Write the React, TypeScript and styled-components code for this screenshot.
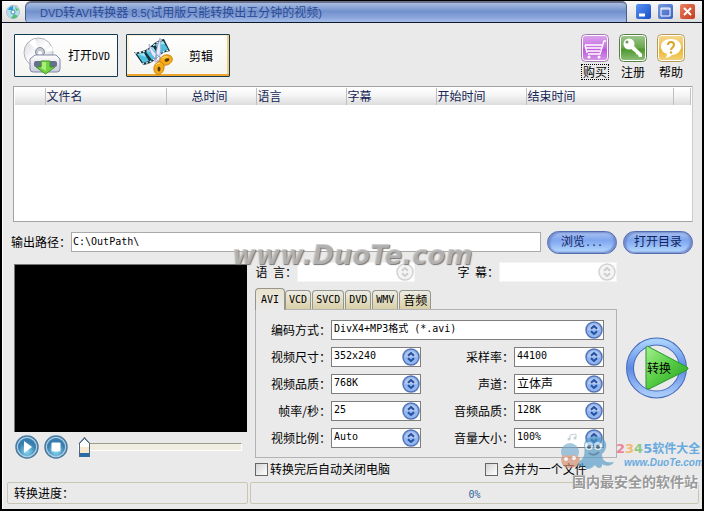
import React, { useState } from "react";
import styled, { createGlobalStyle, css } from "styled-components";

const cjk = `"Noto Sans CJK SC", sans-serif`;
const mono = `"DejaVu Sans Mono", "Noto Sans CJK SC", monospace`;

const GlobalStyle = createGlobalStyle`
  * { box-sizing: border-box; }
  body { margin: 0; background: #e9e9e9; font: 12px/16px ${cjk}; color: #000; }
  button, input, select { font: inherit; color: inherit; margin: 0; }
  button { padding: 0; border: 0; background: none; cursor: pointer; }
`;

const Window = styled.div`
  position: relative;
  display: flex;
  flex-direction: column;
  min-height: 100vh;
  border: solid #000;
  border-width: 1px 2px 2px;
  background: #eaeaea;
  overflow: hidden;
`;

const TitleBar = styled.header`
  display: flex;
  align-items: stretch;
  height: 22px;
  background: linear-gradient(#fafafa, #dedede);
  border-bottom: 1px solid #10182c;
`;

const AppIcon = styled.span`
  display: flex;
  align-items: center;
  padding: 0 4px;
`;

const Title = styled.h1`
  flex: 1;
  margin: 0;
  padding-left: 14px;
  border: 1px solid #4a5c88;
  border-top: 2px solid #69728a;
  border-bottom: 0;
  border-radius: 6px 5px 0 3px;
  background: linear-gradient(#a9bde2, #7291cc 45%, #89a4da 75%, #a5bde8);
  color: #2b4a94;
  font-size: 12px;
  font-weight: 400;
  line-height: 18px;
  white-space: nowrap;
`;

const Latin = styled.span<{ $size?: number; $mono?: boolean }>`
  font-family: ${(p) => (p.$mono ? mono : `"Liberation Sans", sans-serif`)};
  font-size: ${(p) => p.$size ?? 11}px;
`;

const WindowButtons = styled.div`
  display: flex;
  align-items: center;
  gap: 7px;
  padding: 0 7px 0 9px;
`;

const WindowButton = styled.button<{ $tone: string }>`
  display: flex;
  width: 15px;
  height: 15px;
  border-radius: 2px;
  background: ${(p) => p.$tone};
`;

const Content = styled.main`
  display: flex;
  flex: 1;
  flex-direction: column;
  padding: 11px 9px 0 11px;
  border-left: 1px solid #fff;
`;

const Toolbar = styled.div`
  display: flex;
  gap: 8px;
  height: 52px;
`;

const BigButton = styled.button<{ $hot?: boolean }>`
  display: flex;
  align-items: center;
  width: 104px;
  height: 43px;
  padding-left: ${(p) => (p.$hot ? 6 : 8)}px;
  gap: ${(p) => (p.$hot ? 16 : 6)}px;
  border: 1px solid #153b54;
  border-radius: 1px;
  background: linear-gradient(#fff, #f4f4f1);
  white-space: nowrap;
  ${(p) => p.$hot && css`box-shadow: inset 0 -2px #efa52b, inset -2px 0 #f8cd80, inset 2px 1px #fff0d2;`}
`;

const ActionGroup = styled.div`
  display: flex;
  gap: 8px;
  margin-left: auto;
  padding-right: 7px;
`;

const Action = styled.button<{ $focused?: boolean }>`
  display: flex;
  flex-direction: column;
  align-items: center;
  gap: 2px;
  width: 30px;
  white-space: nowrap;
  span {
    padding: 0 1px;
    line-height: 14px;
    border: 1px dotted ${(p) => (p.$focused ? "#000" : "transparent")};
  }
`;

const FileArea = styled.div`
  flex: 1;
  min-height: 135px;
  margin-left: -1px;
  border: 1px solid #a3a3a3;
  border-right-color: #ccc;
  background: #fff;
  padding: 1px;
`;

const FileTable = styled.table`
  width: 100%;
  border-collapse: collapse;
  table-layout: fixed;
`;

const HeadCell = styled.th<{ $w?: number; $right?: boolean }>`
  width: ${(p) => (p.$w ? `${p.$w}px` : "auto")};
  height: 17px;
  padding: 0 ${(p) => (p.$right ? 28 : 2)}px 2px 1px;
  border-right: 1px solid #c0c0c0;
  background: linear-gradient(#fff, #f4f4f4 45%, #dcdcdc);
  color: #142653;
  font-weight: 400;
  line-height: 15px;
  text-align: ${(p) => (p.$right ? "right" : "left")};
`;

const OutputRow = styled.div`
  display: flex;
  align-items: center;
  gap: 6px;
  height: 24px;
  margin-top: 8px;
`;

const OutputField = styled.label`
  display: flex;
  flex: 1;
  align-items: center;
  margin-left: -3px;
  white-space: nowrap;
`;

const PathInput = styled.input`
  flex: 1;
  min-width: 0;
  height: 20px;
  padding: 0 1px 2px;
  border: 1px solid #aaa;
  background: #fff;
  font: 10px/16px ${mono};
`;

const PillButton = styled.button`
  width: 70px;
  height: 23px;
  border: 1px solid #536db0;
  border-radius: 12px;
  background: linear-gradient(#adc4f1, #7fa6ee 38%, #8cb2f4 55%, #b9deff);
  box-shadow: inset 2px 1px 2px #7189cc, inset -2px -1px 2px #7189cc;
  color: #10245e;
  line-height: 18px;
  padding-bottom: 2px;
`;

const Workspace = styled.div`
  display: grid;
  grid-template-columns: 233px minmax(0, 1fr) 68px;
  column-gap: 8px;
  margin-top: 8px;
`;

const Player = styled.section`
  display: flex;
  flex-direction: column;
`;

const Screen = styled.div`
  height: 168px;
  margin-top: 2px;
  background: #000;
  border: 1px solid #777;
  border-width: 1px 0 0 1px;
`;

const Controls = styled.div`
  display: flex;
  align-items: center;
  height: 30px;
  padding-left: 1px;
  gap: 5px;
`;

const RoundButton = styled.button`
  display: flex;
  width: 24px;
  height: 24px;
`;

const Seek = styled.input`
  flex: 1;
  min-width: 0;
  height: 20px;
  margin: 0 5px 0 5px;
  appearance: none;
  background: none;
  &::-webkit-slider-runnable-track {
    height: 8px;
    border: 1px solid #fff;
    border-top-color: #9c9c90;
    background: #f0ede1;
  }
  &::-webkit-slider-thumb {
    appearance: none;
    width: 11px;
    height: 20px;
    margin-top: -7px;
    border: solid #4a6787;
    border-width: 0 1px;
    clip-path: polygon(50% 0, 100% 30%, 100% 100%, 0 100%, 0 30%);
    background: linear-gradient(135deg, #4a6787 0 22%, transparent 22%),
      linear-gradient(225deg, #4a6787 0 22%, transparent 22%),
      linear-gradient(#fff 0 50%, #f8e8cc 50% 80%, #2b6aa5 80%);
  }
`;

const Settings = styled.section`
  display: flex;
  flex-direction: column;
`;

const TrackRow = styled.div`
  display: grid;
  grid-template-columns: 42px minmax(0, 1fr) 84px minmax(0, 1fr);
  align-items: center;
  height: 19px;
`;

const FieldLabel = styled.label`
  text-align: right;
  white-space: pre;
`;

const SelectBox = styled.span<{ $wide?: boolean }>`
  position: relative;
  display: flex;
  grid-column: ${(p) => (p.$wide ? "2 / -1" : "auto")};
  svg { position: absolute; right: 1px; top: 1px; pointer-events: none; }
`;

const Select = styled.select<{ $cjk?: boolean }>`
  width: 100%;
  height: 20px;
  padding: 0 20px 2px 2px;
  appearance: none;
  border: 1px solid #7e7e7e;
  border-radius: 0;
  background: #fff;
  font: ${(p) => (p.$cjk ? `12px/16px ${cjk}` : `10px/16px ${mono}`)};
  opacity: 1;
  &:disabled { border-color: #f4f4f4; }
`;

const Tabs = styled.div`
  display: flex;
  align-items: flex-end;
  gap: 1px;
  height: 21px;
  margin: 7px 0 0;
`;

const Tab = styled.button<{ $active: boolean; $cjk?: boolean }>`
  height: ${(p) => (p.$active ? 22 : 19)}px;
  margin-bottom: ${(p) => (p.$active ? -1 : 0)}px;
  margin-right: ${(p) => (p.$active ? -1 : 0)}px;
  padding: 0 ${(p) => (p.$active ? 5 : 3)}px;
  z-index: ${(p) => (p.$active ? 1 : 0)};
  border: 1px solid #96968c;
  border-bottom: 0;
  border-radius: 4px 4px 0 0;
  background: ${(p) => (p.$active ? "linear-gradient(#e9e3cd, #eaeaea)" : "linear-gradient(#eeede6, #d9cfa5)")};
  font: ${(p) => (p.$cjk ? `12px/16px ${cjk}` : `10px/16px ${mono}`)};
`;

const Panel = styled.div`
  display: grid;
  grid-template-columns: 75px minmax(0, 1fr) 93px minmax(0, 1fr);
  align-items: center;
  row-gap: 7px;
  padding: 10px 12px 9px 0;
  border: 1px solid #b3b3b3;
`;

const Options = styled.div`
  display: grid;
  grid-template-columns: 230px 1fr;
  margin-top: 3px;
  margin-bottom: 1px;
`;

const Check = styled.label`
  display: flex;
  align-items: center;
  gap: 2px;
  white-space: nowrap;
  input {
    appearance: none;
    width: 13px;
    height: 13px;
    border: 1px solid #666;
    background: linear-gradient(135deg, #d4d4d4, #fff);
  }
  input:checked { background: #4d78b8; }
`;

const ConvertSide = styled.div`
  padding: 74px 0 0 1px;
`;

const ConvertButton = styled.button`
  display: grid;
  place-items: center;
  width: 64px;
  height: 64px;
  > * { grid-area: 1 / 1; }
  svg { display: block; }
  span { z-index: 1; padding-left: 2px; }
`;

const StatusBar = styled.footer`
  display: grid;
  grid-template-columns: 241px 1fr;
  gap: 2px;
  padding: 4px 3px 5px 4px;
  border-left: 1px solid #fff;
`;

const StatusCell = styled.div<{ $center?: boolean }>`
  height: 22px;
  padding: 0 6px;
  border: 1px solid #c9c7b4;
  border-radius: 2px;
  line-height: 19px;
  text-align: ${(p) => (p.$center ? "center" : "left")};
  color: ${(p) => (p.$center ? "#2d609b" : "#000")};
`;

const SiteMark = styled.div`
  position: absolute;
  top: 238px;
  left: 0;
  right: 0;
  text-align: center;
  pointer-events: none;
  color: rgba(195, 195, 195, 0.75);
  font: italic bold 26px/32px "DejaVu Sans", sans-serif;
  text-shadow: 1px 1px 1px #777;
`;

const CornerMark = styled.div`
  position: absolute;
  right: 0;
  bottom: 18px;
  display: grid;
  grid-template-columns: 56px 86px;
  pointer-events: none;
`;

const MarkText = styled.div`
  padding-top: 7px;
  color: #69aadf;
  font-weight: 700;
  white-space: nowrap;
`;

const MarkName = styled.div`
  font: bold 12px/16px ${cjk};
`;

const MarkDigit = styled.span<{ $c: string }>`
  color: ${(p) => p.$c};
  font: bold 13px/16px "DejaVu Sans", sans-serif;
`;

const MarkUrl = styled.div`
  padding-left: 8px;
  font: italic bold 10px/12px "Liberation Sans", sans-serif;
`;

const MarkSlogan = styled.div`
  grid-column: 1 / -1;
  padding-left: 12px;
  color: #999;
  font: bold 14px/20px ${cjk};
  text-shadow: 1px 1px 1px #fff;
`;

const Knob = ({ disabled }: { disabled?: boolean }) => (
  <svg width="18" height="18" viewBox="0 0 18 18" aria-hidden="true">
    <circle cx="9" cy="9" r="8" fill={disabled ? "#f4f4f4" : "#91b6f0"} stroke={disabled ? "#d2d2d2" : "#5574b5"} strokeWidth="1.5" />
    {!disabled && <path d="M3 9a6 6 0 0 1 12 0z" fill="#b4c8ee" />}
    <path d="M6 7.800 9 5l3 2.800M6 10.200 9 13l3-2.800" fill="none" stroke={disabled ? "#cdcdcd" : "#2450a2"} strokeWidth="2" />
  </svg>
);

const DiscIcon = () => (
  <svg width="15" height="16" viewBox="0 0 15 16" aria-hidden="true">
    <path d="M2 5 5 1h6l3 5z" fill="#c8dfce" />
    <circle cx="7" cy="8" r="6.500" fill="#aedff0" stroke="#b3c0c8" />
    <path d="M2 6a6 6 0 0 1 5-4v4z" fill="#2e9ad6" /><path d="M8 10l4 2a6 6 0 0 1-7 2z" fill="#55bd79" />
    <path d="M9 3l4 3-3 1z" fill="#5cc56f" />
    <circle cx="7" cy="8" r="2" fill="#fff" stroke="#488eb4" />
  </svg>
);

const OpenDvdIcon = () => (
  <svg width="39" height="38" viewBox="0 0 39 38" aria-hidden="true">
    <defs>
      <linearGradient id="disc" x2="1" y2="1"><stop stopColor="#d5d5de" /><stop offset=".5" stopColor="#fff" /><stop offset="1" stopColor="#b8bccb" /></linearGradient>
      <linearGradient id="drive" x2="0" y2="1"><stop stopColor="#fff" /><stop offset="1" stopColor="#c9ccdc" /></linearGradient>
    </defs>
    <circle cx="15.500" cy="15.500" r="14.500" fill="url(#disc)" stroke="#b0b0ba" />
    <path d="M16 15 6 6a14 14 0 0 1 6-4zM17 15 29 9l1 5z" fill="#fff" />
    <circle cx="17" cy="15" r="4.500" fill="#c5c8d0" stroke="#858b99" /><circle cx="17" cy="16" r="2" fill="#fff" />
    <path d="M12 18h21l4 4v10q0 3-3 3H10q-3 0-3-3V22z" fill="url(#drive)" stroke="#8488a5" />
    <rect x="11" y="24" width="23" height="6" rx="2" fill="#66708c" />
    <path d="M18 24h9v6h5l-9.500 7L13 30h5z" fill="#72d343" stroke="#43932f" />
    <path d="M19 25h4v9l-6-4h2z" fill="#a9ee78" />
  </svg>
);

const FilmIcon = () => (
  <svg width="40" height="38" viewBox="0 0 40 38" aria-hidden="true">
    <path d="M1 15q10 1 17-6 6-6 13-7l6 12q-8 1-13 7-6 6-14 7z" fill="#16303c" />
    <path d="m4 17 7-1 5 8-6 2zM13 15l7-5 6 8-7 5zM22 8l8-4 5 8-7 4z" fill="#4fc0dd" />
    <path d="m4 17 7-1 2 4zM13 15l7-5 2 4zM22 8l8-4 2 3z" fill="#9ce4f2" />
    <path d="M2 16q10 0 17-6 6-6 11-7M9 27q8-1 15-7 6-6 12-7" fill="none" stroke="#dff3f8" strokeWidth="1.300" strokeDasharray="2 2" />
    <path d="M16 7q0 12 11 18l3-3Q20 16 16 7zM27 1q2 11-1 23l-4 1Q23 11 27 1z" fill="#eceaff" stroke="#9699cf" strokeWidth=".7" />
    <ellipse cx="33" cy="23" rx="6.500" ry="5" fill="#f7ad18" stroke="#c47c0c" strokeWidth=".8" transform="rotate(-20 33 23)" />
    <ellipse cx="26" cy="31" rx="5" ry="6.500" fill="#f7ad18" stroke="#c47c0c" strokeWidth=".8" transform="rotate(15 26 31)" />
    <ellipse cx="34" cy="23" rx="2.500" ry="1.500" fill="#5a3a08" transform="rotate(-20 34 23)" />
    <ellipse cx="26" cy="32" rx="1.500" ry="2.500" fill="#5a3a08" />
    <path d="M29 21q3-2 6-1M23 28q1-2 4-2" fill="none" stroke="#ffe18c" />
  </svg>
);

const Badge = ({ id, tone, edge, children }: { id: string; tone: string; edge: string; children: React.ReactNode }) => (
  <svg width="28" height="28" viewBox="0 0 28 28" aria-hidden="true">
    <defs><linearGradient id={id} x2="0" y2="1"><stop stopColor="#fff" stopOpacity=".45" /><stop offset=".5" stopColor="#fff" stopOpacity=".15" /><stop offset=".55" stopColor="#fff" stopOpacity="0" /><stop offset="1" stopColor="#fff" stopOpacity=".35" /></linearGradient></defs>
    <rect x=".5" y=".5" width="27" height="27" rx="4" fill="#fff" stroke={edge} />
    <rect x="2" y="2" width="24" height="24" rx="3" fill={tone} />
    <rect x="2" y="2" width="24" height="24" rx="3" fill={`url(#${id})`} />
    {children}
  </svg>
);

const CartIcon = () => (
  <Badge id="cart" tone="#bd56dc" edge="#a478b0">
    <path d="M4 11h17M5 14h15M6 17h13M4 11l2 8M7 20h12l4-13h2" fill="none" stroke="#fff" strokeWidth="1.300" />
    <circle cx="8" cy="23" r="1.500" fill="#fff" /><circle cx="18" cy="23" r="1.500" fill="#fff" />
  </Badge>
);

const KeyIcon = () => (
  <Badge id="key" tone="#4c972b" edge="#588045">
    <circle cx="10" cy="10" r="5.500" fill="#fff" /><circle cx="8" cy="8" r="1.500" fill="#6b9c59" />
    <path d="m12 15 3-3 8 8v3h-3l-1-2-2-1v-1z" fill="#fff" />
  </Badge>
);

const HelpIcon = () => (
  <Badge id="help" tone="#edb62a" edge="#b89957">
    <path d="M14 5c7 0 10 4 10 8s-4 8-9 8q-3 3-6 3l1-4q-6-2-6-7 0-8 10-8z" fill="#fff" />
    <path d="M11 11q0-3 3-3t3 3q0 1-1.500 2.500T14 16" fill="none" stroke="#dba526" strokeWidth="2" /><circle cx="14" cy="18.500" r="1.200" fill="#dba526" />
  </Badge>
);

const PlayerIcon = ({ stop }: { stop?: boolean }) => (
  <svg width="24" height="24" viewBox="0 0 24 24" aria-hidden="true">
    <defs><radialGradient id="ball" cy=".75"><stop stopColor="#8bdcf5" /><stop offset="1" stopColor="#397daf" /></radialGradient></defs>
    <circle cx="12" cy="12" r="11" fill="#a9d0e6" stroke="#4b799f" strokeWidth="1.500" />
    <circle cx="12" cy="12" r="9" fill="url(#ball)" />
    {stop ? <rect x="7.500" y="7.500" width="9" height="9" rx="1" fill="#fff" /> : <path d="m9 6 8 6-8 6z" fill="#fff" />}
  </svg>
);

const ConvertIcon = () => (
  <svg width="64" height="64" viewBox="0 0 64 64" aria-hidden="true">
    <defs>
      <linearGradient id="ring" x2="0" y2="1"><stop stopColor="#a8d1fc" /><stop offset=".5" stopColor="#5c8ae4" /><stop offset="1" stopColor="#a9cbfa" /></linearGradient>
      <linearGradient id="arrow" x2="1" y2="1"><stop stopColor="#a4f18d" /><stop offset=".5" stopColor="#55cb42" /><stop offset="1" stopColor="#259e25" /></linearGradient>
    </defs>
    <circle cx="30.500" cy="32" r="26.500" fill="none" stroke="#4669b9" strokeWidth="8" />
    <circle cx="30.500" cy="32" r="26.500" fill="none" stroke="url(#ring)" strokeWidth="6" />
    <path d="M20 12q0-3 3-1l38 20q2 1 0 3L23 53q-3 1-3-2z" fill="url(#arrow)" stroke="#26972d" />
  </svg>
);

const Mascot = () => (
  <svg width="56" height="38" viewBox="0 0 56 38" opacity=".65" aria-hidden="true">
    <path d="M24 13C24 4 33 1 40 4c8 3 8 12 2 17 0 8 5 9 12 8-3 5-9 4-12 2 1 5-5 5-7 1-5 6-11 4-10 1-5 2-11-1-9-4 6-1 10-5 8-16z" fill="#529bc7" />
    <circle cx="29" cy="13" r="4" fill="#e4f5fb" /><circle cx="38" cy="13" r="4" fill="#e4f5fb" />
    <circle cx="29" cy="14" r="2" fill="#294e69" /><circle cx="38" cy="14" r="2" fill="#294e69" />
    <path d="M29 20q5 4 10-1" fill="none" stroke="#255d8b" strokeWidth="2" />
    <circle cx="10" cy="19" r="9" fill="#75add0" /><path d="M1 26q2-6 8-3 7-3 11 3-1 9-10 9T1 26z" fill="#d68b6c" />
    <circle cx="6" cy="26" r="2" fill="#fff" /><circle cx="14" cy="25" r="2" fill="#fff" />
    <path d="M10 6V2l6-1v4" fill="none" stroke="#a3b7c4" />
    <circle cx="9" cy="6" r="1.500" fill="#a3b7c4" /><circle cx="15" cy="5" r="1.500" fill="#a3b7c4" />
  </svg>
);

const FormatField = ({ id, label, options, wide, cjkText, disabled }: {
  id: string; label: string; options: string[]; wide?: boolean; cjkText?: boolean; disabled?: boolean;
}) => (
  <>
    <FieldLabel htmlFor={id}>{label}</FieldLabel>
    <SelectBox $wide={wide}>
      <Select id={id} disabled={disabled} $cjk={cjkText}>
        {options.map((o) => <option key={o}>{o}</option>)}
      </Select>
      <Knob disabled={disabled} />
    </SelectBox>
  </>
);

const tabs = ["AVI", "VCD", "SVCD", "DVD", "WMV", "音频"];

const fields = [
  { id: "size", label: "视频尺寸：", options: ["352x240"] },
  { id: "rate", label: "采样率：", options: ["44100"] },
  { id: "vq", label: "视频品质：", options: ["768K"] },
  { id: "channel", label: "声道：", options: ["立体声"], cjkText: true },
  { id: "fps", label: "帧率/秒：", options: ["25"] },
  { id: "aq", label: "音频品质：", options: ["128K"] },
  { id: "aspect", label: "视频比例：", options: ["Auto"] },
  { id: "volume", label: "音量大小：", options: ["100%"] },
];

export default function App() {
  const [tab, setTab] = useState("AVI");
  return (
    <>
      <GlobalStyle />
      <Window>
        <TitleBar>
          <AppIcon><DiscIcon /></AppIcon>
          <Title>
            <Latin>DVD</Latin>转<Latin>AVI</Latin>转换器<Latin> 8.5(</Latin>试用版只能转换出五分钟的视频<Latin>)</Latin>
          </Title>
          <WindowButtons>
            <WindowButton aria-label="最小化" $tone="linear-gradient(135deg, #5c94f0, #164ccc)">
              <svg width="15" height="15"><path d="M3 11h6" stroke="#fff" strokeWidth="3" /></svg>
            </WindowButton>
            <WindowButton aria-label="最大化" $tone="linear-gradient(135deg, #7799e2, #3a62c0)">
              <svg width="15" height="15"><path d="M3 4h9v8H3zM3 5h9" stroke="#fff" fill="none" /></svg>
            </WindowButton>
            <WindowButton aria-label="关闭" $tone="linear-gradient(135deg, #ec8060, #c23b1d)">
              <svg width="15" height="15"><path d="m4 4 7 7m0-7-7 7" stroke="#fff" strokeWidth="2" /></svg>
            </WindowButton>
          </WindowButtons>
        </TitleBar>

        <Content>
          <Toolbar>
            <BigButton><OpenDvdIcon /><span>打开<Latin $mono $size={10}>DVD</Latin></span></BigButton>
            <BigButton $hot><FilmIcon />剪辑</BigButton>
            <ActionGroup>
              <Action $focused><CartIcon /><span>购买</span></Action>
              <Action><KeyIcon /><span>注册</span></Action>
              <Action><HelpIcon /><span>帮助</span></Action>
            </ActionGroup>
          </Toolbar>

          <FileArea>
            <FileTable>
              <thead>
                <tr>
                  <HeadCell $w={30} aria-label="序号" />
                  <HeadCell $w={121}>文件名</HeadCell>
                  <HeadCell $w={90} $right>总时间</HeadCell>
                  <HeadCell $w={90}>语言</HeadCell>
                  <HeadCell $w={90}>字幕</HeadCell>
                  <HeadCell $w={90}>开始时间</HeadCell>
                  <HeadCell>结束时间</HeadCell>
                  <HeadCell $w={17} aria-label="备注" />
                </tr>
              </thead>
            </FileTable>
          </FileArea>

          <OutputRow>
            <OutputField>输出路径：<PathInput defaultValue="C:\OutPath\" /></OutputField>
            <PillButton>浏览<Latin $mono $size={10}>...</Latin></PillButton>
            <PillButton>打开目录</PillButton>
          </OutputRow>

          <Workspace>
            <Player>
              <Screen />
              <Controls>
                <RoundButton aria-label="播放"><PlayerIcon /></RoundButton>
                <RoundButton aria-label="停止"><PlayerIcon stop /></RoundButton>
                <Seek type="range" aria-label="播放位置" min={0} max={100} defaultValue={0} />
              </Controls>
            </Player>

            <Settings>
              <TrackRow>
                <FormatField id="lang" label="语  言：" options={[""]} disabled />
                <FormatField id="sub" label="字  幕：" options={[""]} disabled />
              </TrackRow>
              <Tabs role="tablist">
                {tabs.map((t) => (
                  <Tab key={t} role="tab" aria-selected={t === tab} $active={t === tab} $cjk={t === "音频"} onClick={() => setTab(t)}>{t}</Tab>
                ))}
              </Tabs>
              <Panel role="tabpanel">
                <FormatField id="codec" label="编码方式：" options={["DivX4+MP3格式 (*.avi)"]} wide />
                {fields.map((f) => <FormatField key={f.id} {...f} />)}
              </Panel>
              <Options>
                <Check><input type="checkbox" />转换完后自动关闭电脑</Check>
                <Check><input type="checkbox" />&nbsp;合并为一个文件</Check>
              </Options>
            </Settings>

            <ConvertSide>
              <ConvertButton><ConvertIcon /><span>转换</span></ConvertButton>
            </ConvertSide>
          </Workspace>
        </Content>

        <StatusBar>
          <StatusCell>转换进度：</StatusCell>
          <StatusCell $center><Latin $mono $size={10}>0%</Latin></StatusCell>
        </StatusBar>

        <SiteMark>www.DuoTe.com</SiteMark>
        <CornerMark>
          <Mascot />
          <MarkText>
            <MarkName>
              <MarkDigit $c="#ef8296">2</MarkDigit><MarkDigit $c="#f3ba74">3</MarkDigit><MarkDigit $c="#91c886">4</MarkDigit><MarkDigit $c="#69aadf">5</MarkDigit>软件大全
            </MarkName>
            <MarkUrl>www.DuoTe.com</MarkUrl>
          </MarkText>
          <MarkSlogan>国内最安全的软件站</MarkSlogan>
        </CornerMark>
      </Window>
    </>
  );
}
